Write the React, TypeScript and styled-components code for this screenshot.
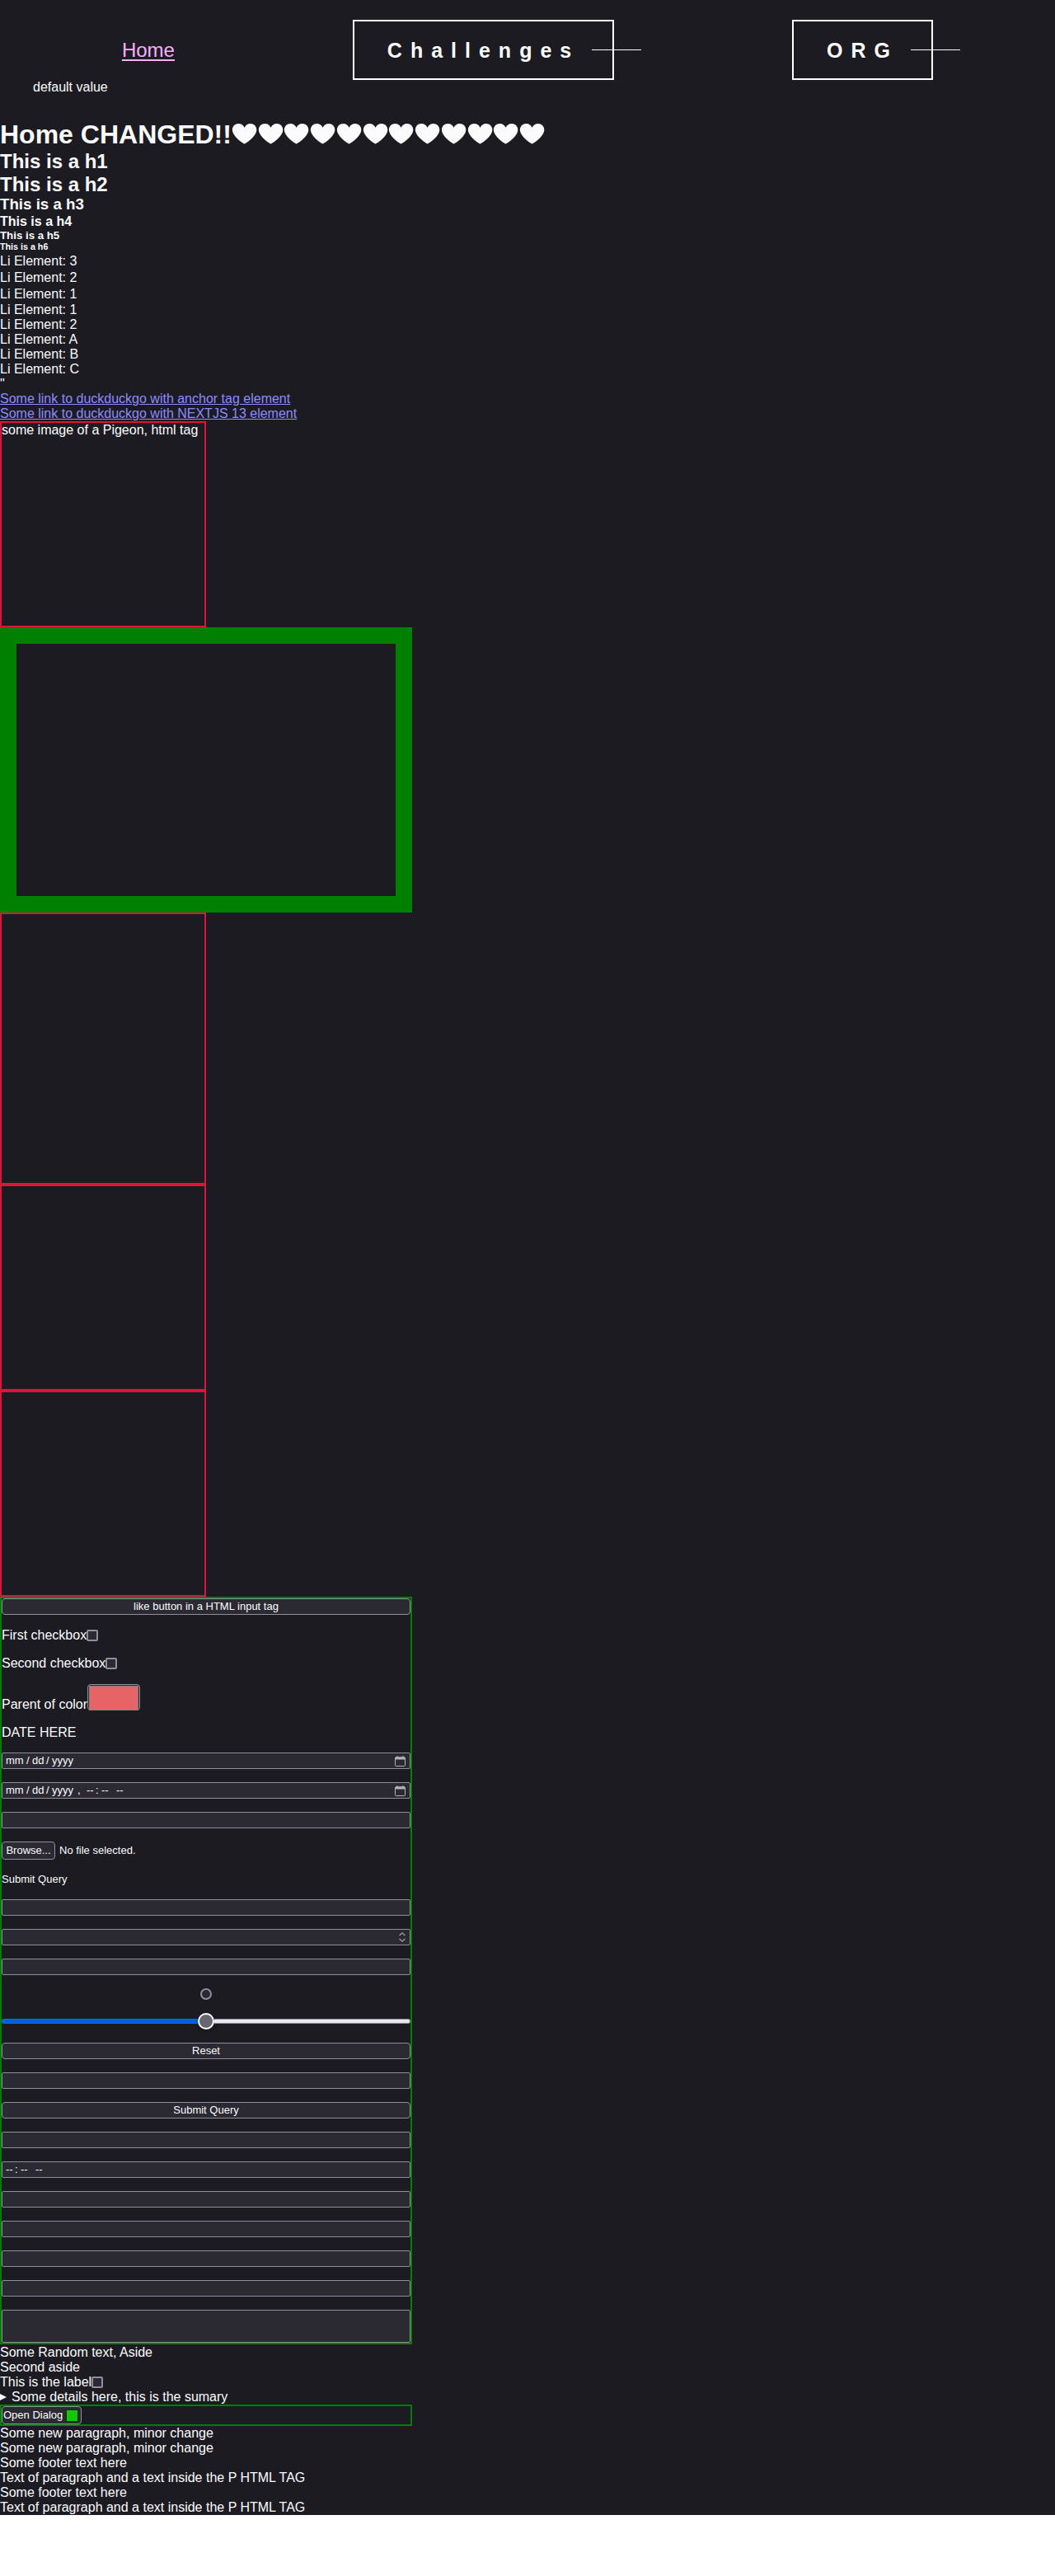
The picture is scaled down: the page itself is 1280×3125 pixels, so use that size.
import React from "react";
import styled, { createGlobalStyle } from "styled-components";

const GlobalStyle = createGlobalStyle`
  * { box-sizing: border-box; margin: 0; padding: 0; }
  body {
    background: #fff;
    color: #fbfbfe;
    font: 16px/18px "Liberation Sans", Arial, sans-serif;
  }
`;

const Page = styled.div`
  background: #1c1b22;
  height: 3051px;
  overflow: hidden;
`;

const Header = styled.header`
  height: 145px;
  padding: 24px 40px 0;
`;
const Nav = styled.nav`
  display: flex;
  justify-content: space-around;
  align-items: center;
  height: 73px;
`;
const HomeLink = styled.a`
  color: #ffadff;
  font-size: 24px;
  line-height: 27px;
  text-decoration: underline 2px;
  text-underline-offset: 3px;
`;
const BoxLink = styled.a`
  position: relative;
  border: 2px solid #fff;
  padding: 21px 40px 19px;
  color: #fff;
  font-size: 25px;
  font-weight: 700;
  letter-spacing: 10px;
  line-height: 29px;
  &::after {
    content: "";
    position: absolute;
    top: 34px;
    right: -35px;
    width: 60px;
    height: 1px;
    background: #fff;
  }
`;

const Heading = styled.div<{ $size: number; $line: number }>`
  font-size: ${(p) => p.$size}px;
  line-height: ${(p) => p.$line}px;
  height: ${(p) => p.$line}px;
  font-weight: 700;
  white-space: nowrap;
`;
const Title = styled(Heading)`
  display: flex;
`;
const HeartIcon = styled.svg`
  flex: none;
  width: 31.75px;
  height: 25px;
  margin-top: 4.7px;
  fill: #fbfbfe;
`;
const Line = styled.p<{ $h?: number }>`
  height: ${(p) => p.$h ?? 18}px;
  line-height: ${(p) => p.$h ?? 18}px;
  white-space: nowrap;
`;
const TextLink = styled.a`
  color: #8c8cff;
  text-decoration: underline;
`;

const Frame = styled.div<{ $h: number }>`
  width: 250px;
  height: ${(p) => p.$h}px;
  border: 2px solid crimson;
`;
const GreenFrame = styled.div`
  width: 500px;
  height: 346px;
  border: 20px solid green;
`;

const Form = styled.form`
  width: 500px;
  height: 907px;
  border: 2px solid green;
  display: flex;
  flex-direction: column;
  gap: 16px;
  font-size: 13px;
`;
const Row = styled.label<{ $h?: number }>`
  display: flex;
  align-items: center;
  flex: none;
  height: ${(p) => p.$h ?? 18}px;
  font-size: 16px;
  line-height: 18px;
  white-space: nowrap;
`;
const ColorRow = styled(Row)`
  align-items: flex-end;
  line-height: 19px;
`;
const Field = styled.div<{ $h?: number }>`
  display: flex;
  align-items: center;
  justify-content: space-between;
  flex: none;
  height: ${(p) => p.$h ?? 20}px;
  border: 1px solid #8f8f9d;
  border-radius: 2px;
  background: #2b2a33;
  padding: 0 5px 0 4px;
  line-height: 16px;
`;
const Parts = styled.span`
  display: flex;
`;
const Part = styled.span<{ $w: number }>`
  width: ${(p) => p.$w}px;
`;
const Button = styled.button`
  flex: none;
  height: 20px;
  border: 1px solid #8f8f9d;
  border-radius: 4px;
  background: #2b2a33;
  color: #fbfbfe;
  font: 13px/16px "Liberation Sans", Arial, sans-serif;
`;
const Check = styled.input.attrs({ type: "checkbox" })`
  appearance: none;
  width: 14px;
  height: 14px;
  border: 2px solid #8f8f9d;
  border-radius: 2px;
  background: #2b2a33;
`;
const Radio = styled.input.attrs({ type: "radio" })`
  appearance: none;
  align-self: center;
  flex: none;
  width: 14px;
  height: 14px;
  border: 2px solid #8f8f9d;
  border-radius: 50%;
  background: #2b2a33;
`;
const Swatch = styled.span`
  width: 64px;
  height: 32px;
  margin-bottom: 2px;
  border: 1px solid #8f8f9d;
  border-radius: 4px;
  background: #2b2a33;
  padding: 1px;
  &::before {
    content: "";
    display: block;
    height: 28px;
    border: 1px solid #808080;
    background: #e66465;
  }
`;
const FileRow = styled.div`
  display: flex;
  align-items: center;
  gap: 5px;
  height: 22px;
`;
const Browse = styled(Button)`
  width: 65px;
  height: 22px;
`;
const ImageSubmit = styled.p`
  height: 16px;
  line-height: 16px;
`;
const Slider = styled.div`
  display: flex;
  align-items: center;
  justify-content: center;
  height: 20px;
`;
const Track = styled.span<{ $filled?: boolean }>`
  flex: 1;
  height: 6px;
  border: 1px solid ${(p) => (p.$filled ? "#0a6cf0" : "#8f8f9d")};
  border-width: ${(p) => (p.$filled ? "1px 0 1px 1px" : "1px 1px 1px 0")};
  border-radius: ${(p) => (p.$filled ? "3px 0 0 3px" : "0 3px 3px 0")};
  background: ${(p) => (p.$filled ? "#0060df" : "#e9e9ed")};
`;
const Thumb = styled.span`
  width: 20px;
  height: 20px;
  border: 2px solid #fff;
  border-radius: 50%;
  background: #676774;
  box-shadow: 0 1px 3px rgba(0, 0, 0, 0.5);
`;

const Asides = styled.section`
  padding-top: 1px;
`;
const Summary = styled(Line)`
  display: flex;
  align-items: center;
  gap: 6px;
`;
const Marker = styled.span`
  border: solid transparent;
  border-width: 4px 0 4px 8px;
  border-left-color: #fbfbfe;
`;
const DialogBox = styled.div`
  width: 500px;
  height: 26px;
  border: 2px solid green;
`;
const OpenButton = styled(Button)`
  display: flex;
  align-items: center;
  justify-content: space-between;
  width: 97px;
  height: 22px;
  padding: 0 3px 0 1px;
`;
const GreenSquare = styled.span`
  width: 15px;
  height: 15px;
  border: 1px solid #0a3a10;
  background: #16c60c;
`;

const Heart = () => (
  <HeartIcon viewBox="0 0 31.75 25">
    <path d="M15.6 24.4C14.6 24.4 .9 15.5 .9 7.4.9 3.2 4.3 0 8.3 0c3.3 0 5.9 1.8 7.3 4.7C17 1.8 19.6 0 22.9 0c4 0 7.4 3.2 7.4 7.4 0 8.1-13.7 17-14.7 17z" />
  </HeartIcon>
);
const Calendar = () => (
  <svg width="13" height="13" viewBox="0 0 13 13" fill="none">
    <path d="M1 2h11v2H1zM3 0v2M10 0v2" fill="#b0b0b6" stroke="#b0b0b6" />
    <rect x=".5" y="1.8" width="12" height="10.7" rx="1" stroke="#b0b0b6" />
  </svg>
);
const Spinner = () => (
  <svg width="8" height="12" viewBox="0 0 8 12" fill="none" stroke="#8f8f9d" strokeWidth="1.5">
    <path d="M.5 4 4 .9 7.5 4M.5 8 4 11.1 7.5 8" />
  </svg>
);

const DateParts = () => (
  <>
    <Part $w={25}>mm</Part>
    <Part $w={7}>/</Part>
    <Part $w={17}>dd</Part>
    <Part $w={7}>/</Part>
    <Part $w={31}>yyyy</Part>
  </>
);
const TimeParts = () => (
  <>
    <Part $w={11}>--</Part>
    <Part $w={7}>:</Part>
    <Part $w={18}>--</Part>
    <Part $w={10}>--</Part>
  </>
);

const headings: [string, number, number][] = [
  ["This is a h1", 24, 28],
  ["This is a h2", 24, 27],
  ["This is a h3", 18.72, 22],
  ["This is a h4", 16, 19],
  ["This is a h5", 13.28, 15],
  ["This is a h6", 10.72, 13],
];
const items: [string, number][] = [
  ["3", 21], ["2", 20], ["1", 19], ["1", 19], ["2", 18], ["A", 18], ["B", 18], ["C", 18],
];
const closing = [
  "Some new paragraph, minor change",
  "Some new paragraph, minor change",
  "Some footer text here",
  "Text of paragraph and a text inside the P HTML TAG",
  "Some footer text here",
  "Text of paragraph and a text inside the P HTML TAG",
];

export default function App() {
  return (
    <Page>
      <GlobalStyle />
      <Header>
        <Nav>
          <HomeLink>Home</HomeLink>
          <BoxLink>Challenges</BoxLink>
          <BoxLink>ORG</BoxLink>
        </Nav>
        <Line>default value</Line>
      </Header>
      <Title as="h1" $size={32} $line={37}>
        Home CHANGED!!
        {Array.from({ length: 12 }, (_, i) => <Heart key={i} />)}
      </Title>
      {headings.map(([text, size, line]) => (
        <Heading key={text} $size={size} $line={line}>{text}</Heading>
      ))}
      {items.map(([name, h], i) => (
        <Line key={i} $h={h}>Li Element: {name}</Line>
      ))}
      <Line>"</Line>
      <Line><TextLink>Some link to duckduckgo with anchor tag element</TextLink></Line>
      <Line><TextLink>Some link to duckduckgo with NEXTJS 13 element</TextLink></Line>
      <Frame $h={250}>some image of a Pigeon, html tag</Frame>
      <GreenFrame />
      <Frame $h={330} />
      <Frame $h={250} />
      <Frame $h={250} />
      <Form>
        <Button type="button">like button in a HTML input tag</Button>
        <Row>First checkbox<Check /></Row>
        <Row>Second checkbox<Check /></Row>
        <ColorRow $h={34}>Parent of color<Swatch /></ColorRow>
        <Row $h={17}>DATE HERE</Row>
        <Field><Parts><DateParts /></Parts><Calendar /></Field>
        <Field>
          <Parts><DateParts /><Part $w={11}>,</Part><TimeParts /></Parts>
          <Calendar />
        </Field>
        <Field />
        <FileRow><Browse type="button">Browse...</Browse>No file selected.</FileRow>
        <ImageSubmit>Submit Query</ImageSubmit>
        <Field />
        <Field><span /><Spinner /></Field>
        <Field />
        <Radio />
        <Slider><Track $filled /><Thumb /><Track /></Slider>
        <Button type="button">Reset</Button>
        <Field />
        <Button type="button">Submit Query</Button>
        <Field />
        <Field><Parts><TimeParts /></Parts></Field>
        <Field />
        <Field />
        <Field />
        <Field />
        <Field $h={40} />
      </Form>
      <Asides>
        <Line>Some Random text, Aside</Line>
        <Line>Second aside</Line>
        <Row>This is the label<Check /></Row>
        <Summary><Marker />Some details here, this is the sumary</Summary>
      </Asides>
      <DialogBox><OpenButton>Open Dialog <GreenSquare /></OpenButton></DialogBox>
      {closing.map((text, i) => <Line key={i}>{text}</Line>)}
    </Page>
  );
}
